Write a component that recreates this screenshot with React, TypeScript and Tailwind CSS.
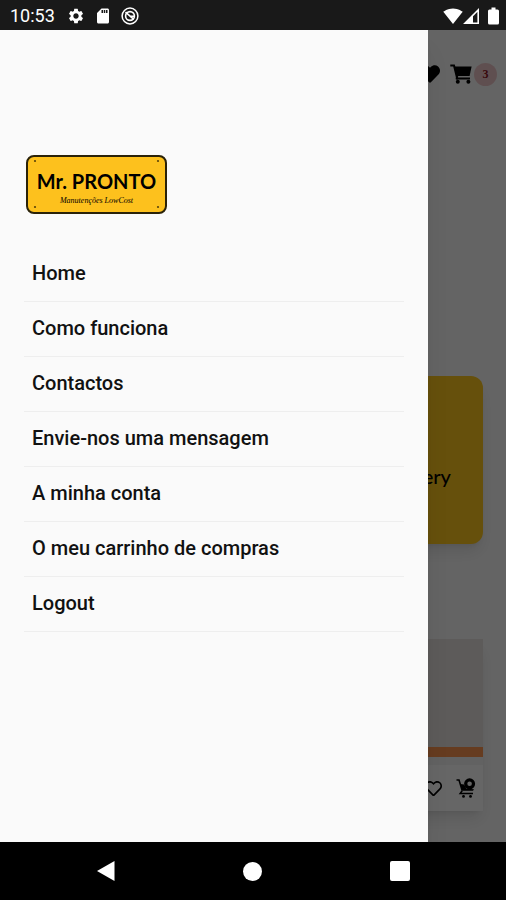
import React from 'react';
import { MdSdCard, MdSettings, MdSignalWifi4Bar } from 'react-icons/md';
import { FaHeart, FaRegHeart } from 'react-icons/fa';

const menuItems = [
    'Home',
    'Como funciona',
    'Contactos',
    'Envie-nos uma mensagem',
    'A minha conta',
    'O meu carrinho de compras',
    'Logout',
];

const StatusBar = () => (
    <div className="flex h-[30px] items-center justify-between bg-[#191919] pl-[10px] pr-[7px] pt-px text-white">
        <div className="flex items-center gap-[9px]">
            <span className="mr-[3px] text-lg leading-6">10:53</span>
            <MdSettings size={18} />
            <MdSdCard size={18} />
            <svg width="18" height="18" viewBox="0 0 18 18" fill="none" stroke="currentColor">
                <circle cx="9" cy="9" r="7.9" strokeWidth="1.5" />
                <circle cx="9" cy="9" r="4.4" strokeWidth="1.6" />
                <path d="M4.5 5.2 12.8 12.4M8.8 9.2h4.2" strokeWidth="1.6" />
            </svg>
        </div>
        <div className="flex items-center">
            <MdSignalWifi4Bar size={20} />
            <svg width="17" height="18" viewBox="0 0 17 18">
                <path d="M15.2 3V16.2H2Z" fill="none" stroke="currentColor" strokeWidth="1.6" />
                <path d="M10 7.5V17H1Z" fill="currentColor" />
            </svg>
            <svg width="11" height="18" viewBox="0 0 11 18" fill="currentColor" className="ml-2">
                <path d="M3.5 0.5h4V2.5H9.5Q11 2.5 11 4V16Q11 17.5 9.5 17.5H1.5Q0 17.5 0 16V4Q0 2.5 1.5 2.5H3.5Z" />
            </svg>
        </div>
    </div>
);

const CartIcon = () => (
    <svg width="22" height="20" viewBox="0 0 22 20" fill="none" stroke="currentColor">
        <path d="M0.3 1.5H4L7.2 14.4H20" strokeWidth="2" />
        <path d="M4 2.6H21.6L19.6 12H6.4Z" fill="currentColor" stroke="none" />
        <path d="M7.2 12 6.6 15.5" strokeWidth="2" />
        <circle cx="7.8" cy="17.7" r="2" fill="currentColor" stroke="none" />
        <circle cx="18.4" cy="17.7" r="2" fill="currentColor" stroke="none" />
    </svg>
);

const CartAddIcon = () => (
    <svg width="20" height="20" viewBox="0 0 20 20" fill="none" stroke="currentColor">
        <path d="M0.5 2H3L6.2 12.5" strokeWidth="1.6" />
        <path d="M4.2 6 6.3 12.8 17 12.8 18 11.2 10.5 10.8 8 6.5Z" fill="currentColor" stroke="none" />
        <path d="M6.2 12.8 4.2 15.4H17" strokeWidth="1.5" />
        <circle cx="13.6" cy="5.8" r="3.9" strokeWidth="3.2" />
        <circle cx="7.5" cy="18.4" r="1.4" fill="currentColor" stroke="none" />
        <circle cx="14.5" cy="18.4" r="1.4" fill="currentColor" stroke="none" />
    </svg>
);

const Shop = () => (
    <div className="flex flex-1 flex-col bg-[#fafafa]">
        {/* Header */}
        <header className="flex h-[88px] items-center justify-end pr-[9px]">
            <button aria-label="Favoritos" className="mr-[10px]">
                <FaHeart size={20} />
            </button>
            <button aria-label="Carrinho" className="flex items-center gap-[2px]">
                <CartIcon />
                <span className="flex size-[23px] items-center justify-center rounded-full bg-[#eec6c9] font-['Liberation_Serif',serif] text-xs font-bold text-[#8c1420]">
                    3
                </span>
            </button>
        </header>

        {/* Banner */}
        <section className="mx-[23px] mt-[258px] flex h-[168px] items-center justify-end rounded-xl bg-[#ffc81e] pr-8 pt-8 shadow-lg">
            <h2 className="font-[Lato,sans-serif] text-xl font-medium">Delivery</h2>
        </section>

        {/* Product card */}
        <article className="mx-[23px] mt-[95px] shadow-lg">
            <div className="h-[108px] bg-[#e9e4e0]" />
            <div className="h-[10px] bg-[#ff9650]" />
            <div className="h-2 bg-[#f4f4f4]" />
            <div className="flex h-[46px] items-center justify-end gap-[14px] bg-white pr-[7px]">
                <button aria-label="Adicionar aos favoritos">
                    <FaRegHeart size={17} />
                </button>
                <button aria-label="Adicionar ao carrinho">
                    <CartAddIcon />
                </button>
            </div>
        </article>
    </div>
);

const Logo = () => (
    <div className="relative flex h-[59px] w-[141px] flex-col items-center rounded-lg border-2 border-[#2a2208] bg-[#fdc11d] pt-2">
        <span className="font-[Lato,sans-serif] text-xl font-bold leading-8">Mr. PRONTO</span>
        <span className="font-['Liberation_Serif',serif] text-[8px] italic leading-[8px]">Manutenções LowCost</span>
        <svg className="absolute inset-0" width="137" height="55" viewBox="0 0 137 55" fill="#5a4408">
            <circle cx="7" cy="4" r="1.1" />
            <circle cx="130" cy="4" r="1.1" />
            <circle cx="7" cy="50" r="1.1" />
            <circle cx="130" cy="50" r="1.1" />
        </svg>
    </div>
);

const Drawer = () => (
    <aside className="absolute inset-y-0 left-0 right-[78px] bg-[#fafafa] px-6 pt-[125px] shadow-xl">
        <div className="pl-[2px]">
            <Logo />
        </div>
        <nav className="mt-[33px]">
            <ul>
                {menuItems.map((item) => (
                    <li key={item} className="border-b border-[#eeeeee]">
                        <a href="#" className="block px-2 pt-3 pb-[14px] text-xl leading-7 font-medium text-[#111111]">
                            {item}
                        </a>
                    </li>
                ))}
            </ul>
        </nav>
    </aside>
);

const NavigationBar = () => (
    <div className="flex h-[58px] items-center justify-around bg-black px-8 text-white">
        <button aria-label="Voltar">
            <svg width="20" height="22" viewBox="0 0 20 22" fill="currentColor">
                <path d="M18.5 1v20L1 11Z" />
            </svg>
        </button>
        <button aria-label="Início" className="size-[19px] rounded-full bg-white" />
        <button aria-label="Recentes" className="size-5 rounded-xs bg-white" />
    </div>
);

const App = () => {
    return (
        <div className="flex min-h-screen flex-col font-[Roboto,sans-serif]">
            <StatusBar />
            <main className="relative flex flex-1 flex-col overflow-hidden">
                <Shop />
                <div className="absolute inset-0 bg-black/60" />
                <Drawer />
            </main>
            <NavigationBar />
        </div>
    );
};

export default App;
